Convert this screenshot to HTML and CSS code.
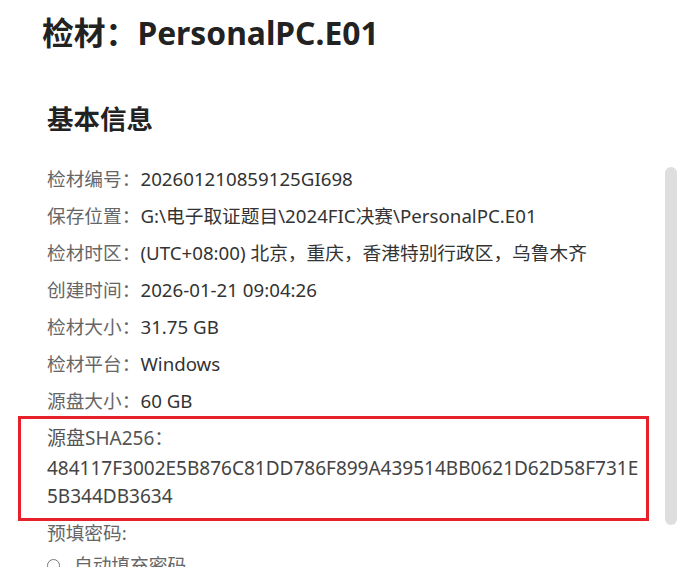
FILE: index.html
```html
<!DOCTYPE html>
<html lang="zh-CN">
<head>
<meta charset="utf-8">
<link rel="stylesheet" href="styles.css">
</head>
<body>
<div class="page">
  <h1 class="title">检材：PersonalPC.E01</h1>
  <div class="panel">
    <div class="content">
      <h2 class="section">基本信息</h2>
      <div class="rows">
        <div class="row"><span class="label">检材编号：</span><span class="value">202601210859125GI698</span></div>
        <div class="row"><span class="label">保存位置：</span><span class="value">G:\电子取证题目\2024FIC决赛\PersonalPC.E01</span></div>
        <div class="row"><span class="label">检材时区：</span><span class="value">(UTC+08:00) 北京，重庆，香港特别行政区，乌鲁木齐</span></div>
        <div class="row"><span class="label">创建时间：</span><span class="value">2026-01-21 09:04:26</span></div>
        <div class="row"><span class="label">检材大小：</span><span class="value">31.75 GB</span></div>
        <div class="row"><span class="label">检材平台：</span><span class="value">Windows</span></div>
        <div class="row"><span class="label">源盘大小：</span><span class="value">60 GB</span></div>
      </div>
      <div class="highlight">
        <div class="hash-label">源盘SHA256：</div>
        <div class="hash">484117F3002E5B876C81DD786F899A439514BB0621D62D58F731E<br>5B344DB3634</div>
      </div>
      <div class="pw"><span class="label">预填密码:</span></div>
      <div class="opt"><span class="check"></span><span class="label">自动填充密码</span></div>
    </div>
    <div class="scrollbar"><div class="thumb"></div></div>
  </div>
</div>
</body>
</html>
```

FILE: styles.css
```css
html, body {
  margin: 0;
  padding: 0;
  background: #ffffff;
  overflow: hidden;
  height: 567px;
}
body {
  font-family: "Noto Sans", "Noto Sans CJK SC", sans-serif;
  color: #333333;
}
.page {
  width: 685px;
  height: 567px;
  overflow: hidden;
}
.title {
  margin: 0;
  padding: 9px 0 0 42px;
  font-size: 31.8px;
  line-height: 48px;
  font-weight: 700;
  color: #222222;
}
.panel {
  display: flex;
  margin-top: 44px;
}
.content {
  flex: 1;
  padding-left: 18px;
}
.section {
  margin: 0 0 0 29px;
  font-size: 26.5px;
  line-height: 36px;
  font-weight: 700;
  color: #222222;
}
.rows {
  display: flex;
  flex-direction: column;
  gap: 7px;
  margin: 27px 0 0 29px;
}
.row {
  font-size: 18.7px;
  line-height: 30px;
}
.label {
  color: #666666;
}
.value {
  color: #333333;
}
.highlight {
  width: 631px;
  border: 3px solid #e8202a;
  padding: 5px 0 8px 26px;
  box-sizing: border-box;
  color: #444444;
  font-size: 19px;
  line-height: 28px;
}
.hash-label {
  color: #555555;
}
.hash {
  margin-top: 2px;
  color: #444444;
}
.pw {
  margin-left: 29px;
  font-size: 18.7px;
  line-height: 24px;
}
.opt {
  display: flex;
  align-items: center;
  gap: 14px;
  margin: 6px 0 0 29px;
  font-size: 18.7px;
  line-height: 28px;
}
.check {
  width: 11px;
  height: 11px;
  border: 1.5px solid #777777;
  border-radius: 50%;
}
.scrollbar {
  width: 12px;
  margin: 66px 8px 0 0;
}
.thumb {
  height: 358px;
  border-radius: 6px;
  background: #dedede;
}
```
